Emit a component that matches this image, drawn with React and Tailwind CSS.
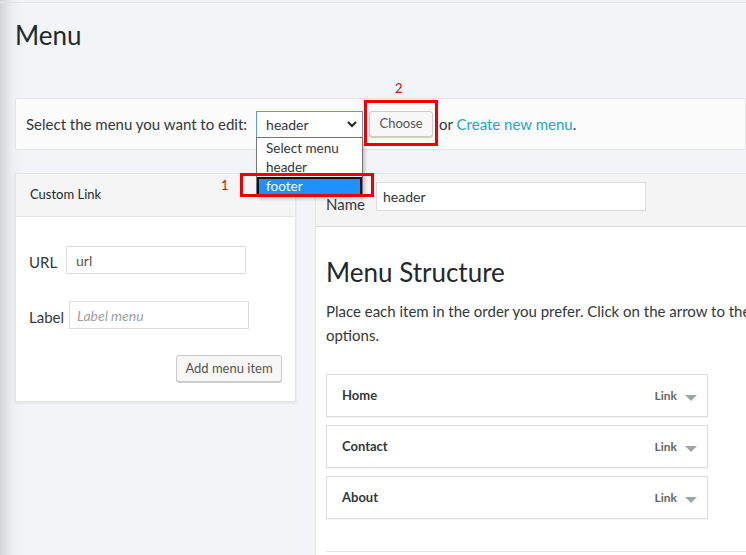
import React from "react";

const items = ["Home", "Contact", "About"];

function MenuItem({ title }) {
    return (
        <div className="flex h-[43px] w-[382px] items-center border border-[#dcdcdc] bg-white pl-[15px] pr-[10px] shadow-[0_1px_1px_rgba(0,0,0,0.04)]">
            <span className="flex-1 text-[13px] font-bold text-[#32373c]">{title}</span>
            <span className="text-[12px] font-bold text-[#666]">Link</span>
            <svg width="12" height="7" viewBox="0 0 12 7" className="ml-[8px] mt-[6px]">
                <path d="M0 0 L12 0 L6 6 Z" fill="#a0a5aa" />
            </svg>
        </div>
    );
}

export default function App() {
    return (
        <div
            className="relative h-[555px] w-[746px] overflow-hidden bg-[linear-gradient(to_right,#d4d4d6,#eceef2_12px,#f3f4f8_26px)] text-[#32373c]"
            style={{ fontFamily: "Lato, 'Noto Sans', sans-serif" }}
        >
            <div className="h-[3px] border-b border-[#e3e4e8]" />

            {/* Title */}
            <h1 className="ml-[15px] mt-[15px] text-[26px] leading-[34px] text-[#23282d]">Menu</h1>

            {/* Select bar */}
            <div className="ml-[15px] mt-[46px] flex h-[52px] items-center border border-[#e5e5e5] bg-[#fbfbfb] pl-[10px]">
                <span className="text-[15px]">Select the menu you want to edit:</span>
                <div className="ml-[9px] flex h-[27px] w-[107px] items-center border border-[#5b9dd9] bg-white pl-[9px] pr-[5px]">
                    <span className="flex-1 text-[14px] text-[#32373c]">header</span>
                    <svg width="10" height="7" viewBox="0 0 10 7">
                        <path d="M1 1 L5 5 L9 1" fill="none" stroke="#222" strokeWidth="2" />
                    </svg>
                </div>
                <button className="ml-[6px] h-[26px] w-[64px] rounded-[3px] border border-[#ccc] bg-[#f7f7f7] text-[13px] text-[#555] shadow-[0_1px_0_#ccc]">
                    Choose
                </button>
                <span className="ml-[6px] text-[15px]">
                    or <span className="text-[#2ea2cc]">Create new menu</span>.
                </span>
            </div>

            {/* Columns */}
            <div className="ml-[15px] mt-[23px] flex gap-[19px]">
                {/* Custom link panel */}
                <div className="w-[281px] shrink-0 self-start border border-[#e5e5e5] bg-white shadow-[0_1px_2px_rgba(0,0,0,0.08)]">
                    <div className="flex h-[43px] items-center border-b border-[#e5e5e5] bg-[#f5f5f5] pl-[14px] text-[13px] text-[#23282d]">
                        Custom Link
                    </div>
                    <div className="px-[13px] pb-[19px] pt-[29px]">
                        <div className="flex items-end">
                            <span className="mb-[1px] w-[37px] text-[15px]">URL</span>
                            <div className="flex h-[28px] w-[180px] items-center border border-[#ddd] bg-white pl-[9px] text-[14px] text-[#555]">
                                url
                            </div>
                        </div>
                        <div className="mt-[27px] flex items-end">
                            <span className="mb-[1px] w-[40px] text-[15px]">Label</span>
                            <div className="flex h-[28px] w-[180px] items-center border border-[#ddd] bg-white pl-[7px] text-[14px] italic text-[#a0a0a0]">
                                Label menu
                            </div>
                        </div>
                        <div className="mt-[26px] flex justify-end">
                            <button className="h-[27px] w-[106px] rounded-[3px] border border-[#ccc] bg-[#f7f7f7] text-[13px] text-[#555] shadow-[0_1px_0_#ccc]">
                                Add menu item
                            </button>
                        </div>
                    </div>
                </div>

                {/* Menu structure panel */}
                <div className="h-[400px] w-[520px] shrink-0 border-l border-t border-[#e5e5e5] bg-white">
                    <div className="flex h-[53px] items-start border-b border-[#dfdfdf] bg-[#f4f4f4] pl-[10px] pt-[8px]">
                        <span className="mt-[11px] w-[50px] text-[15px]">Name</span>
                        <div className="flex h-[29px] w-[270px] items-center border border-[#ddd] bg-white pl-[6px] text-[14px] text-[#32373c]">
                            header
                        </div>
                    </div>
                    <div className="pl-[10px] pt-[28px]">
                        <h2 className="text-[26px] leading-[34px] text-[#23282d]">Menu Structure</h2>
                        <p className="mt-[10px] whitespace-nowrap text-[15px] leading-[24px]">
                            Place each item in the order you prefer. Click on the arrow to the right of the item to reveal additional configuration
                            <br />
                            options.
                        </p>
                        <div className="mt-[27px] flex flex-col gap-[8px]">
                            {items.map((t) => (
                                <MenuItem key={t} title={t} />
                            ))}
                        </div>
                        <div className="mt-[32px] border-t border-[#e5e5e5]" />
                    </div>
                </div>
            </div>

            {/* Open dropdown */}
            <div className="absolute left-[256px] top-[137px] w-[107px] border border-[#767676] bg-white pt-[1px] text-[13.5px] leading-[19px] shadow-[2px_2px_3px_rgba(0,0,0,0.2)]">
                <div className="pl-[9px]">Select menu</div>
                <div className="pl-[9px]">header</div>
                <div className="border-2 border-[#111] bg-[#1e90ff] pl-[7px] leading-[15px] text-white">footer</div>
            </div>

            {/* Annotations */}
            <div className="absolute left-[240px] top-[173px] h-[24px] w-[134px] border-[3px] border-[#ee0000]" />
            <span className="absolute left-[221px] top-[176px] text-[13px] text-[#ee0000]">1</span>
            <div className="absolute left-[364px] top-[100px] h-[46px] w-[74px] border-[3px] border-[#ee0000]" />
            <span className="absolute left-[395px] top-[79px] text-[13px] text-[#ee0000]">2</span>
        </div>
    );
}
